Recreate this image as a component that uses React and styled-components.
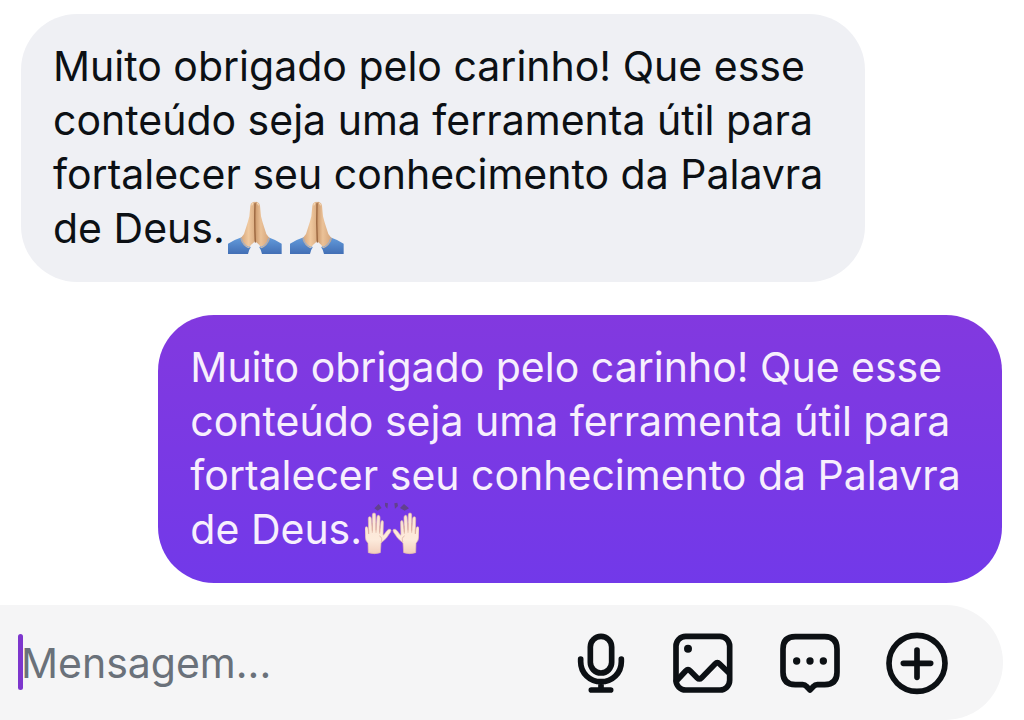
import React from 'react';
import styled, { createGlobalStyle } from 'styled-components';

const GlobalStyle = createGlobalStyle`
  * { box-sizing: border-box; }
  body {
    margin: 0;
    background: #ffffff;
    font-family: Inter, "Liberation Sans", sans-serif;
  }
`;

const Screen = styled.main`
  display: flex;
  flex-direction: column;
  min-height: 100vh;
  padding-top: 14px;
`;

const Thread = styled.section`
  flex: 1;
  display: flex;
  flex-direction: column;
  gap: 33px;
  padding: 0 22px 22px 21px;
`;

const Bubble = styled.p`
  align-self: ${({ $sent }) => ($sent ? 'flex-end' : 'flex-start')};
  max-width: 86%;
  margin: 0;
  padding: 25px 32px 27px;
  border-radius: 56px;
  font-size: 41px;
  line-height: 54px;
  color: ${({ $sent }) => ($sent ? '#f7effd' : '#0c1014')};
  background: ${({ $sent }) =>
    $sent ? 'linear-gradient(#8239df, #7239e9)' : '#eff0f4'};
`;

const Emoji = styled.svg`
  width: 54px;
  height: 54px;
  margin-left: ${({ $spaced }) => ($spaced ? '8px' : '3px')};
  vertical-align: top;
`;

const Composer = styled.form`
  display: flex;
  align-items: center;
  gap: 43px;
  height: 115px;
  margin-right: 21px;
  padding: 0 54px 0 18px;
  border-radius: 0 58px 58px 0;
  background: #f5f5f6;
`;

const Field = styled.label`
  position: relative;
  display: flex;
  flex: 1;
  min-width: 0;
`;

const Caret = styled.span`
  position: absolute;
  top: 0;
  left: 0;
  width: 5px;
  height: 56px;
  border-radius: 3px;
  background: #7d36cd;
`;

const Input = styled.input`
  width: 100%;
  height: 58px;
  padding: 0 0 0 3px;
  border: 0;
  outline: 0;
  background: transparent;
  font: inherit;
  font-size: 41px;
  color: #0c1014;
  caret-color: #7d36cd;

  &::placeholder {
    color: #6a717a;
    opacity: 1;
  }
`;

const IconButton = styled.button`
  flex: none;
  display: flex;
  padding: 0;
  border: 0;
  background: none;
  color: #0c1014;
  cursor: pointer;
`;

const Icon = styled.svg`
  height: 64px;
  fill: none;
  stroke: currentColor;
  stroke-width: 17;
  stroke-linecap: round;
  stroke-linejoin: round;
`;

function PrayingHands({ id, spaced }) {
  return (
    <Emoji $spaced={spaced} viewBox="0 0 162 162" role="img" aria-label="🙏🏼">
      <defs>
        <linearGradient id={id + 'l'} x1="0" x2="1">
          <stop offset="0" stopColor="#d3a278" />
          <stop offset=".55" stopColor="#f0c99f" />
          <stop offset="1" stopColor="#d9ab80" />
        </linearGradient>
        <linearGradient id={id + 'r'} x1="1" x2="0">
          <stop offset="0" stopColor="#d3a278" />
          <stop offset=".6" stopColor="#ebc298" />
          <stop offset="1" stopColor="#c99568" />
        </linearGradient>
        <linearGradient id={id + 's'} x1="0" y1="0" x2="0" y2="1">
          <stop offset="0" stopColor="#639bdb" />
          <stop offset="1" stopColor="#426fb5" />
        </linearGradient>
      </defs>
      <path fill={`url(#${id}s)`} d="M0 128Q20 116 41 109L68 139Q62 148 60 159H0Z" />
      <path fill={`url(#${id}s)`} d="M161 128Q141 116 121 109L94 139Q100 148 102 159H161Z" />
      <path fill={`url(#${id}l)`} d="M81 5Q81 1 76 3L72 5Q68 7 67 14L64 46Q60 63 54 80L48 99L37 113Q43 133 62 142Q69 130 78 124L82 119Z" />
      <path fill={`url(#${id}r)`} d="M81 5Q82 1 87 3L91 5Q95 7 96 14L99 46Q103 63 109 80L115 99L126 113Q119 133 100 142Q94 130 85 124L80 119Z" />
      <path fill="none" stroke="#9b6740" strokeWidth="4" strokeLinecap="round" d="M81 8Q79 65 82 123" />
      <path fill="none" stroke="#fae1c2" strokeWidth="3" strokeLinecap="round" d="M75 6Q72 5 72 12M88 6Q91 5 91 12" />
      <path fill="none" stroke="#8caedb" strokeWidth="3" d="M40 112Q45 134 67 140M122 112Q117 134 95 140" />
    </Emoji>
  );
}

const HAND =
  'M10 152L9 124Q1 116 1 105L0 80Q0 74 4 74Q8 74 9 80L11 96L10 50Q10 44 14 44Q19 44 19 50L22 86L22 39Q22 33 27 33Q32 33 32 39L33 85L36 45Q37 39 41 40Q45 41 45 47L44 91L48 60Q49 55 53 56Q56 58 55 63L54 100Q60 96 65 87Q70 80 76 82Q80 85 76 91Q65 111 48 123L46 152Q28 158 10 152Z';
const FINGERS = 'M11 94V83M22 91V64M33 91V64M44 94V72M49 119Q54 107 44 102';

function RaisedHands() {
  return (
    <Emoji viewBox="0 0 162 162" role="img" aria-label="🙌🏻">
      <defs>
        <linearGradient id="palm" x1="0" y1="0" x2="0" y2="1">
          <stop offset="0" stopColor="#fbe4d2" />
          <stop offset=".65" stopColor="#fdebdc" />
          <stop offset="1" stopColor="#f2cfbd" />
        </linearGradient>
      </defs>
      <path fill="#61418e" d="M41 6L28 19L38 26L50 18ZM60 2L69 4L67 20L60 12ZM88 4L97 2L99 12L90 20ZM117 6L105 18L119 26L132 19Z" />
      {['', 'translate(162 0) scale(-1 1)'].map((transform) => (
        <g key={transform} transform={transform}>
          <path fill="url(#palm)" stroke="#e5bbac" strokeWidth="2" d={HAND} />
          <path fill="none" stroke="#dba99a" strokeWidth="2" strokeLinecap="round" d={FINGERS} />
        </g>
      ))}
    </Emoji>
  );
}

const MESSAGE =
  'Muito obrigado pelo carinho! Que esse conteúdo seja uma ferramenta útil para fortalecer seu conhecimento da Palavra de Deus.';

export default function App() {
  return (
    <>
      <GlobalStyle />
      <Screen>
        <Thread aria-label="Conversa">
          <Bubble>
            {MESSAGE}
            <PrayingHands id="a" />
            <PrayingHands id="b" spaced />
          </Bubble>
          <Bubble $sent>
            {MESSAGE}
            <RaisedHands />
          </Bubble>
        </Thread>
        <Composer onSubmit={(event) => event.preventDefault()}>
          <Field>
            <Input type="text" placeholder="Mensagem..." aria-label="Mensagem" />
            <Caret />
          </Field>
          <IconButton type="button" aria-label="Gravar áudio">
            <Icon width="54" viewBox="39 34 162 192">
              <rect x="88" y="50" width="64" height="110" rx="32" />
              <path d="M59 118V126C59 160 86 186 120 186S181 160 181 126V118M120 186V211M91 211H149" />
            </Icon>
          </IconButton>
          <IconButton type="button" aria-label="Enviar imagem">
            <Icon width="64" viewBox="331 34 192 192">
              <rect x="346" y="50" width="161" height="161" rx="29" />
              <circle cx="382" cy="87" r="12" fill="currentColor" stroke="none" />
              <path d="M347 184L375 154Q382 147 389 154L409 174Q416 181 423 174L463 133Q470 126 477 133L505 160" />
            </Icon>
          </IconButton>
          <IconButton type="button" aria-label="Figurinhas">
            <Icon width="64" viewBox="52 93 192 192">
              <path d="M104 110H192Q229 110 229 147V217Q229 254 192 254H170Q163 254 159 259L148 270L137 259Q133 254 126 254H104Q67 254 67 217V147Q67 110 104 110Z" />
              <g fill="currentColor" stroke="none">
                <circle cx="108" cy="183" r="11" />
                <circle cx="148" cy="183" r="11" />
                <circle cx="188" cy="183" r="11" />
              </g>
            </Icon>
          </IconButton>
          <IconButton type="button" aria-label="Mais opções">
            <Icon width="64" viewBox="374 93 192 192">
              <circle cx="470" cy="190" r="84" />
              <path d="M470 150V232M429 190H511" />
            </Icon>
          </IconButton>
        </Composer>
      </Screen>
    </>
  );
}
